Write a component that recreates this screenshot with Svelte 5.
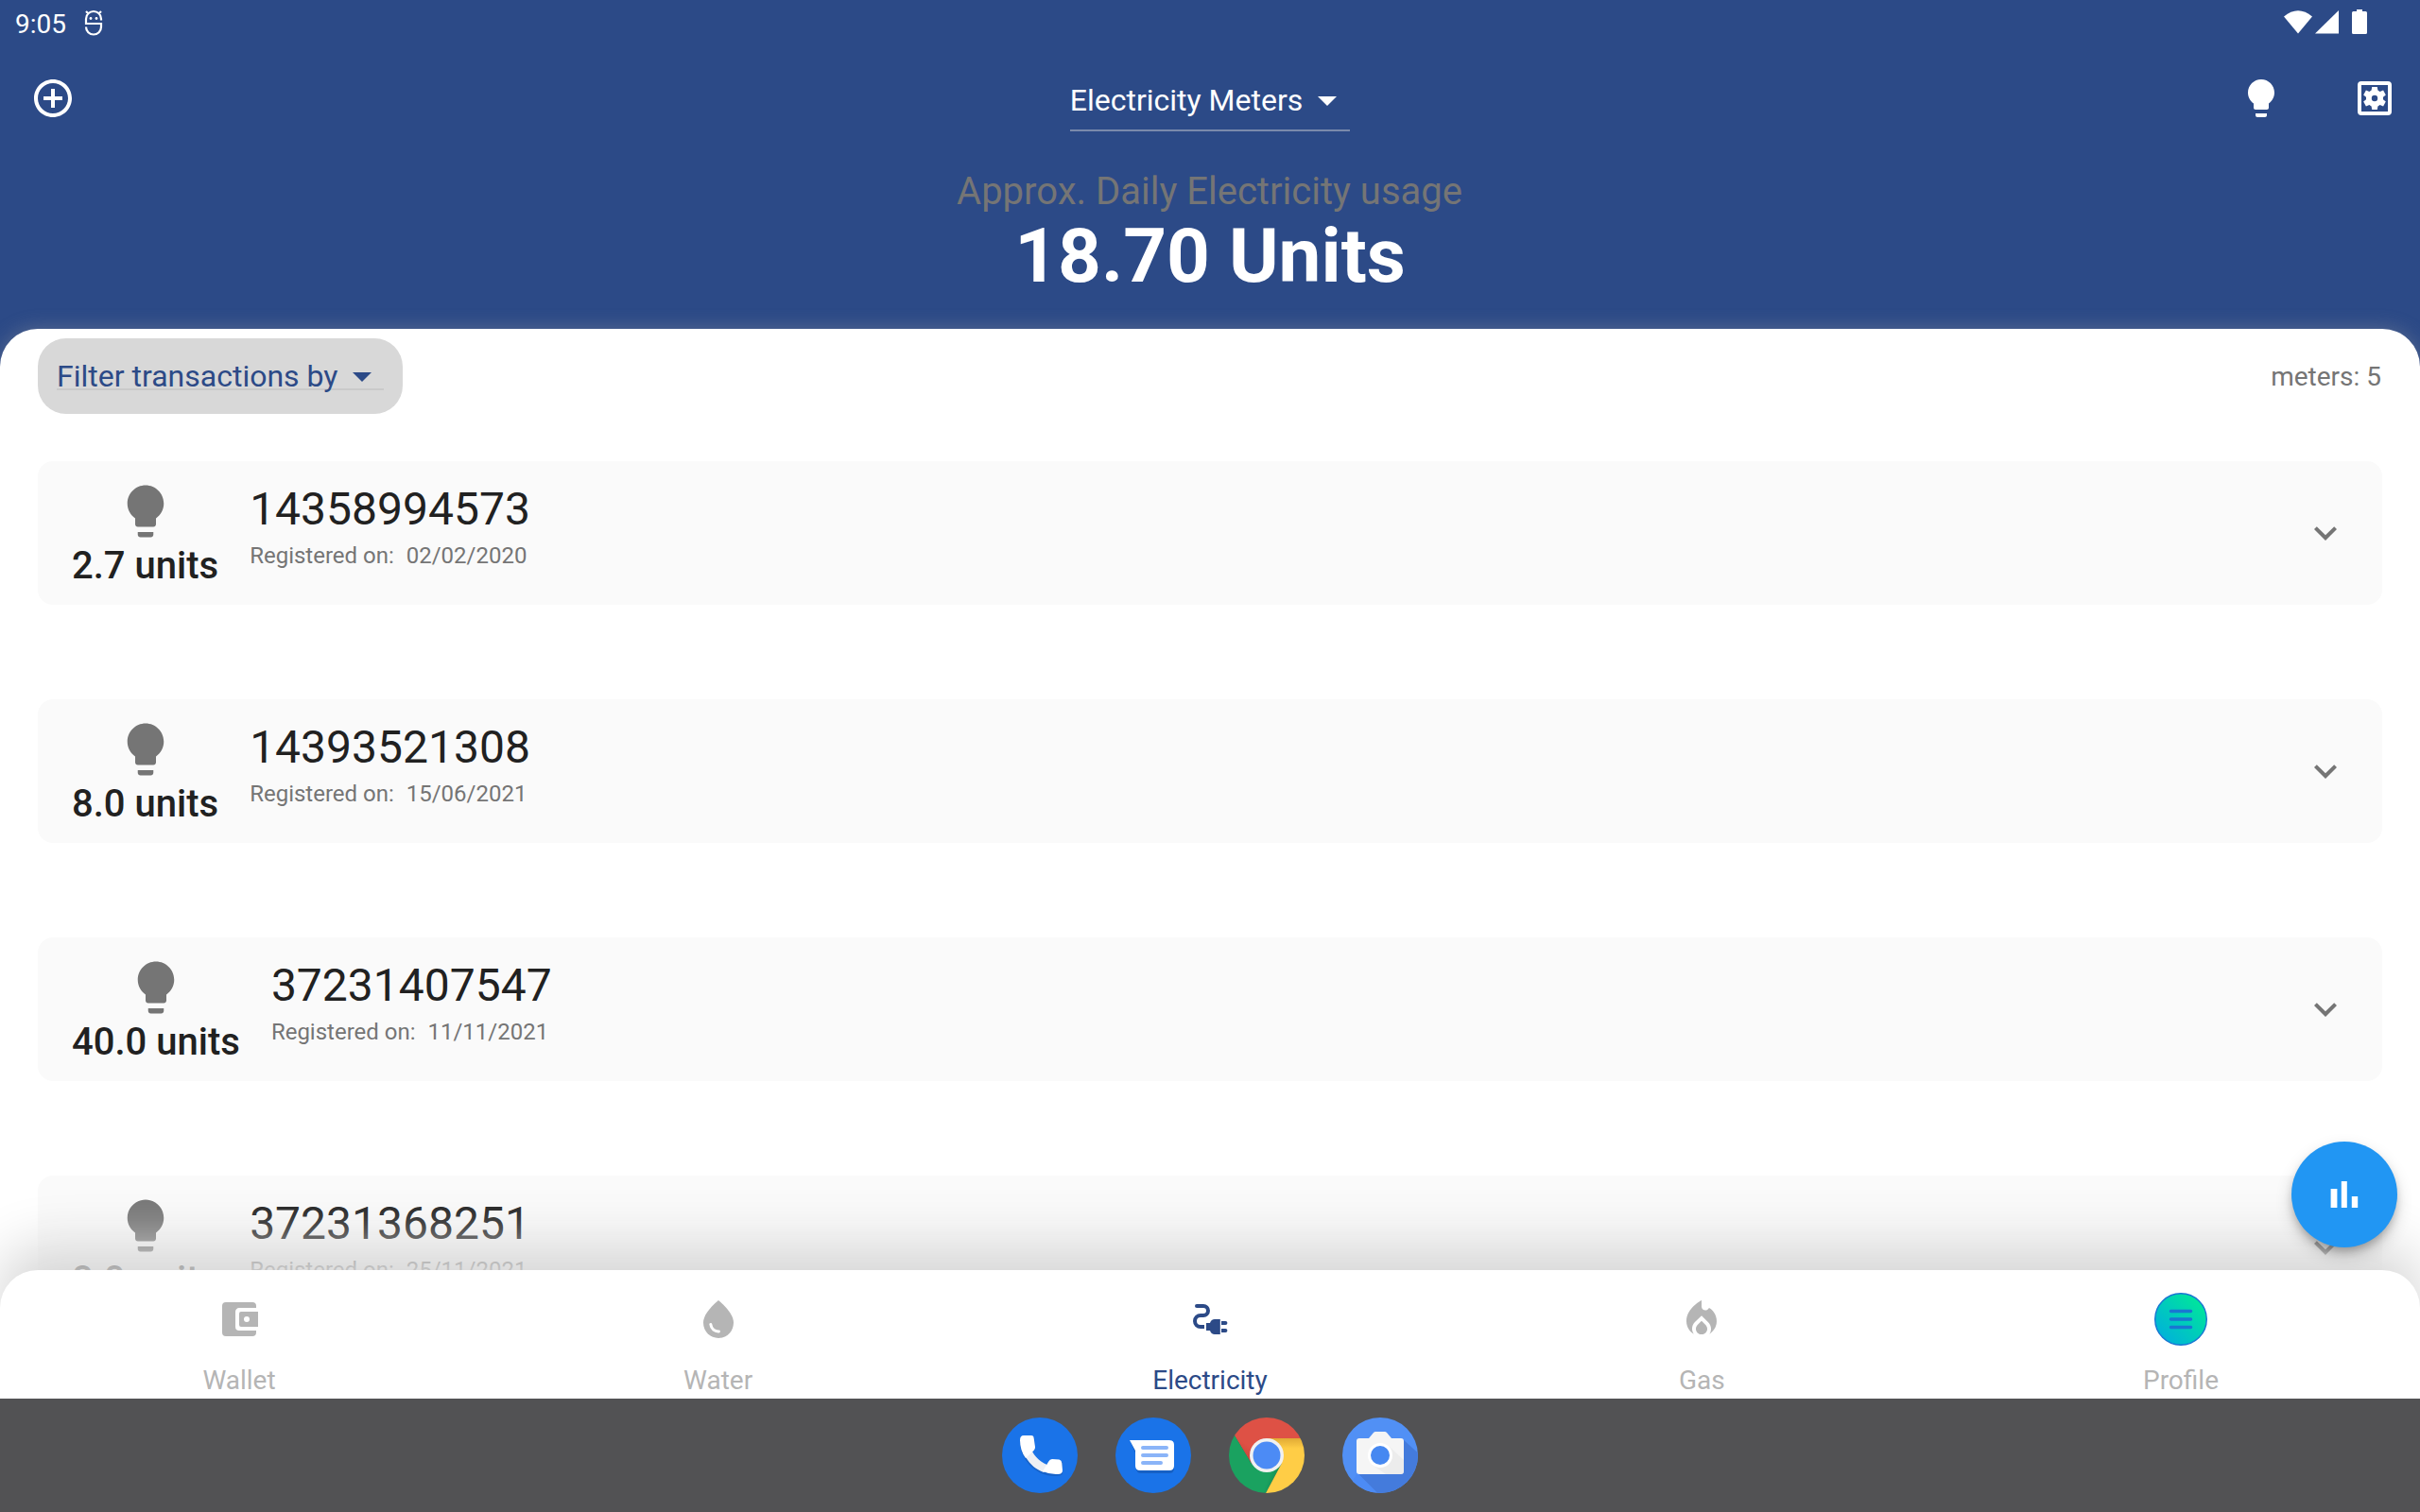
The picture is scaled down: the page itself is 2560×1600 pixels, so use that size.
<script>
  const bulb = 'M9 21c0 .55.45 1 1 1h4c.55 0 1-.45 1-1v-1H9v1zm3-19C8.14 2 5 5.14 5 9c0 2.38 1.19 4.47 3 5.74V17c0 .55.45 1 1 1h6c.55 0 1-.45 1-1v-2.26c1.81-1.27 3-3.36 3-5.74 0-3.86-3.14-7-7-7z';
  const meters = [
    { units: '2.7 units', number: '14358994573', date: '02/02/2020' },
    { units: '8.0 units', number: '14393521308', date: '15/06/2021' },
    { units: '40.0 units', number: '37231407547', date: '11/11/2021' },
    { units: '8.0 units', number: '37231368251', date: '25/11/2021' }
  ];
</script>

<div class="screen">
  <header>
    <div class="status">
      <span class="clock">9:05</span>
      <svg class="debug" viewBox="0 0 20 28" width="20" height="28" fill="none" stroke="#fff" stroke-width="2.200">
        <path d="M18 11.500V10a8 8 0 0 0-16 0v5h16v3.500a8 8 0 0 1-16 0M4.500 4.500 2 2M15.500 4.500 18 2" />
        <circle cx="7" cy="9.500" r="1.400" fill="#fff" stroke="none" /><circle cx="13" cy="9.500" r="1.400" fill="#fff" stroke="none" />
      </svg>
      <svg class="signals" viewBox="0 0 90 28" width="90" height="28" fill="#fff">
        <path d="M0 7.500Q15-5 30 7.500L15 25.500z" />
        <path d="M33 25.500 58 1v24.500z" />
        <path d="M77 0h6v2h3.500q1.500 0 1.500 1.500v21q0 1.500-1.500 1.500h-13q-1.500 0-1.500-1.500v-21Q72 2 73.500 2H77z" />
      </svg>
    </div>
    <div class="toolbar">
      <svg class="ic" viewBox="0 0 24 24"><path d="M13 7h-2v4H7v2h4v4h2v-4h4v-2h-4V7zm-1-5C6.480 2 2 6.480 2 12s4.480 10 10 10 10-4.480 10-10S17.520 2 12 2zm0 18c-4.410 0-8-3.590-8-8s3.590-8 8-8 8 3.590 8 8-3.590 8-8 8z" /></svg>
      <div class="picker"><span>Electricity Meters</span><svg class="ic" viewBox="0 0 24 24"><path d="M7 10l5 5 5-5z" /></svg></div>
      <div class="actions">
        <svg class="ic" viewBox="0 0 24 24"><path d={bulb} /></svg>
        <svg class="ic" viewBox="0 0 24 24"><path fill-rule="evenodd" d="M5 3h14a2 2 0 0 1 2 2v14a2 2 0 0 1-2 2H5a2 2 0 0 1-2-2V5a2 2 0 0 1 2-2zm0 2v14h14V5z" /><path fill-rule="evenodd" d="M10.600 6h2.800l.3 1.800 1.100.65 1.750-.65 1.350 2.400-1.400 1.150v1.300l1.400 1.150-1.350 2.400-1.750-.65-1.100.65-.3 1.800h-2.800l-.3-1.800-1.100-.65-1.750.65-1.350-2.400 1.400-1.150v-1.300l-1.400-1.150 1.350-2.400 1.750.65 1.100-.65zM12 10.400a1.600 1.600 0 1 0 0 3.200 1.600 1.600 0 0 0 0-3.200z" /></svg>
      </div>
    </div>
    <div class="caption">Approx. Daily Electricity usage</div>
    <div class="total">18.70 Units</div>
  </header>

  <main>
    <div class="filters">
      <div class="pill"><div class="pill-in"><span>Filter transactions by</span><svg class="ic" viewBox="0 0 24 24"><path d="M7 10l5 5 5-5z" /></svg></div></div>
      <span class="count">meters: 5</span>
    </div>
    <div class="list">
      {#each meters as m}
        <article>
          <div class="usage">
            <svg viewBox="0 0 24 24" width="66" height="66"><path d={bulb} /></svg>
            <span>{m.units}</span>
          </div>
          <div class="info">
            <div class="number">{m.number}</div>
            <div class="date">Registered on:&nbsp; <span>{m.date}</span></div>
          </div>
          <svg class="ic chev" viewBox="0 0 24 24"><path d="M16.590 8.590 12 13.170 7.410 8.590 6 10l6 6 6-6z" /></svg>
        </article>
      {/each}
    </div>
  </main>

  <nav>
    <div class="tab">
      <svg class="ic" viewBox="0 0 24 24"><path fill-rule="evenodd" d="M10 16V8c0-1.100.9-2 2-2h9V5a2 2 0 0 0-2-2H5a2 2 0 0 0-2 2v14a2 2 0 0 0 2 2h14a2 2 0 0 0 2-2v-1h-9a2 2 0 0 1-2-2zM13 8q-1 0-1 1v6q0 1 1 1h9V8zm3 2.500a1.500 1.500 0 1 1 0 3 1.500 1.500 0 0 1 0-3z" /></svg>
      <span>Wallet</span>
    </div>
    <div class="tab">
      <svg class="ic" viewBox="0 0 24 24"><path d="M12 2c-5.330 4.550-8 8.480-8 11.800 0 4.980 3.800 8.200 8 8.200s8-3.220 8-8.200c0-3.320-2.670-7.250-8-11.800z" /><path d="M7.900 14.700c.3 2.500 2.200 3.900 4.300 3.750" fill="none" stroke="#fff" stroke-width="1.500" stroke-linecap="round" /></svg>
      <span>Water</span>
    </div>
    <div class="tab active">
      <svg class="ic" viewBox="0 0 24 24"><path d="M5 5h3.500a2.500 2.500 0 0 1 0 5H7a3 3 0 0 0 0 6h2" fill="none" stroke="currentColor" stroke-width="2" /><circle cx="5" cy="5" r="1" /><path d="M10 14h2c.4-1.300 1.300-2 2.500-2h2.900v8h-2.900c-1.200 0-2.100-.7-2.500-2h-2z" /><path d="M18 13h2.200a1 1 0 0 1 0 2H18zM18 17h2.200a1 1 0 0 1 0 2H18z" /></svg>
      <span>Electricity</span>
    </div>
    <div class="tab">
      <svg class="ic" viewBox="0 0 24 24"><path d="M12 12.900 9.870 15c-.56.550-.87 1.290-.87 2.070C9 18.680 10.350 20 12 20s3-1.320 3-2.930c0-.78-.31-1.520-.87-2.070L12 12.900z" /><path d="m16 6-.44.550C14.380 8.020 12 7.190 12 5.300V2S4 6 4 13c0 2.920 1.560 5.470 3.890 6.860-.56-.79-.89-1.760-.89-2.800 0-1.320.52-2.560 1.470-3.500L12 10.100l3.530 3.470c.95.930 1.470 2.170 1.470 3.500 0 1.020-.31 1.960-.85 2.750 1.890-1.150 3.290-3.060 3.710-5.300.66-3.550-1.070-6.900-3.860-8.520z" /></svg>
      <span>Gas</span>
    </div>
    <div class="tab profile">
      <svg viewBox="0 0 56 56" width="56" height="56">
        <defs><linearGradient id="pg" x1=".1" y1=".9" x2=".9" y2=".1"><stop offset="0" stop-color="#00b0dc" /><stop offset="1" stop-color="#00e898" /></linearGradient></defs>
        <circle cx="28" cy="28" r="27.300" fill="url(#pg)" stroke="#1976d2" stroke-width="1.400" />
        <path d="M17.500 19.500h21M17.500 28h21M17.500 36.500h21" stroke="#1976d2" stroke-width="3.500" stroke-linecap="round" />
      </svg>
      <span>Profile</span>
    </div>
  </nav>

  <footer>
    <svg viewBox="0 0 80 80" width="80" height="80">
      <circle cx="40" cy="40" r="40" fill="#1a73e8" />
      <path d="M19 26c0 18 16 36 37 36 5 0 8-1 8-3V47H50l-6 8C37 51 31 46 26 40l9-6-1-13H22q-3 0-3 5z" fill="#1558b5" opacity=".6" />
      <path d="M25 42c5 8 11 13 19 16l8-6C41 48 34 41 31 34z" fill="#eef0f4" />
      <path d="M23 19h8q2.500 0 2.700 3l1.300 9q.2 2-1 3.500L25 43q-6-8-6-19 0-5 4-5z" fill="#fff" />
      <path d="M43 57l6-10q1.500-3 4-3l7.500.5q2.500.5 2.800 3.500l.7 8q0 4-5 4-8 .5-16-3z" fill="#fff" />
    </svg>
    <svg viewBox="0 0 80 80" width="80" height="80">
      <circle cx="40" cy="40" r="40" fill="#1a73e8" />
      <path d="M16 26l6 14v14q0 5 5 5h30q5 0 5-5V32z" fill="#1558b5" opacity=".7" />
      <path d="M15 24h42q5 0 5 5v22q0 5-5 5H26q-5 0-5-5V35z" fill="#fff" />
      <path d="M29 32h25M29 40h25M29 48h19" stroke="#8ab4f8" stroke-width="4" stroke-linecap="round" />
    </svg>
    <svg viewBox="0 0 80 80" width="80" height="80">
      <defs>
        <clipPath id="cc"><circle cx="40" cy="40" r="40" /></clipPath>
        <linearGradient id="cy" x1="0" y1="0" x2="0" y2="1"><stop offset="0" stop-color="#e0aa35" /><stop offset=".18" stop-color="#ffcd46" /></linearGradient>
        <linearGradient id="cr" x1="0" y1=".8" x2=".5" y2=".4"><stop offset="0" stop-color="#c33f33" /><stop offset=".5" stop-color="#de5145" /></linearGradient>
        <linearGradient id="cg" x1=".3" y1=".6" x2="1" y2=".9"><stop offset=".6" stop-color="#1aa260" /><stop offset="1" stop-color="#0f7a45" /></linearGradient>
      </defs>
      <g clip-path="url(#cc)">
        <path d="M0 0h80v22H40L24 49 6 19z" fill="url(#cr)" />
        <path d="M6 19L24 49 40 58 55.600 49 38 82H0V19z" fill="url(#cg)" />
        <path d="M40 22h42v60H38L55.600 49z" fill="url(#cy)" />
      </g>
      <circle cx="40" cy="40" r="18" fill="#f1f1f1" /><circle cx="40" cy="40" r="14.500" fill="#4c8bf5" />
    </svg>
    <svg viewBox="0 0 80 80" width="80" height="80">
      <defs><clipPath id="kc"><circle cx="40" cy="40" r="40" /></clipPath></defs>
      <circle cx="40" cy="40" r="40" fill="#5190f5" />
      <g clip-path="url(#kc)">
        <path d="M64 23l20 18v42H40L16 59z" fill="#447bdc" />
        <path d="M16 59l24 24H0z" fill="#4c8bf5" />
        <path d="M18 22h10l5-6q1-1 2-1h10q1 0 2 1l5 6h10q3 0 3 3v32q0 3-3 3H18q-3 0-3-3V25q0-3 3-3z" fill="#f5f5f5" />
        <path d="M50 31l15 14v12q0 3-3 3H46L31 50z" fill="#ddd" opacity=".35" />
      </g>
      <circle cx="40" cy="40" r="13" fill="#fff" /><circle cx="40" cy="40" r="10" fill="#4688f1" />
    </svg>
  </footer>

  <div class="fab"><svg viewBox="0 0 24 24" width="48" height="48" fill="#fff"><path d="M4.800 9H8.200V19H4.800zM10.400 5h3v14h-3zM15.900 13h3.200v6h-3.200z" /></svg></div>
</div>

<style>
  :global(body) { margin: 0; overflow: hidden; }
  .screen { position: relative; width: 2560px; height: 1600px; overflow: hidden; display: flex; flex-direction: column; background: #2c4a87; font-family: Roboto, sans-serif; }
  svg { display: block; flex: none; }
  .ic { width: 48px; height: 48px; fill: currentColor; }
  header { height: 348px; flex: none; color: #fff; display: flex; flex-direction: column; }
  .status { height: 50px; display: flex; align-items: center; padding: 0 54px 0 16px; }
  .clock { font-size: 28px; line-height: 50px; padding-top: 2px; }
  .debug { margin-left: 19px; margin-top: -2px; }
  .signals { margin-left: auto; margin-top: -2px; }
  .toolbar { height: 112px; flex: none; display: grid; grid-template-columns: 1fr auto 1fr; padding: 0 24px; margin-bottom: 8px; }
  .toolbar > .ic { margin: 30px 0 0 8px; }
  .picker { display: flex; align-items: center; height: 68px; box-sizing: border-box; margin-top: 21px; border-bottom: 2px solid #7a8aab; font-size: 32px; padding-top: 4px; }
  .picker, .pill-in { white-space: nowrap; }
  .picker .ic, .pill-in .ic { margin-left: 2px; }
  .actions { display: flex; justify-content: flex-end; gap: 72px; padding-top: 30px; }
  .caption { font-size: 40px; line-height: 46px; margin-top: 10px; text-align: center; color: #757575; padding-right: 1px; }
  .total { font-size: 80px; line-height: 91px; font-weight: 700; text-align: center; }
  main { flex: none; height: 1036px; background: #fff; border-radius: 40px 40px 0 0; box-shadow: 0 0 20px rgba(158, 158, 158, .4); }
  .filters { display: flex; justify-content: space-between; padding: 10px 40px 0; }
  .pill { box-sizing: border-box; width: 386px; height: 80px; padding: 15px 20px; border-radius: 30px; background: #d8d8d8; color: #2c4a87; }
  .pill-in { display: flex; align-items: center; height: 27px; padding-top: 11px; border-bottom: 2px solid #cacaca; font-size: 32px; }
  .count { font-size: 28px; line-height: 80px; padding: 1px 1px 0 0; margin-bottom: -1px; color: #757575; }
  .list { padding: 50px 40px 0; display: flex; flex-direction: column; gap: 100px; height: 856px; }
  article { flex: none; box-sizing: border-box; height: 152px; padding: 20px 36px; display: flex; background: #fafafa; border-radius: 16px; color: #212121; }
  .usage { display: flex; flex-direction: column; align-items: center; font-size: 40px; line-height: 49px; font-weight: 500; }
  .usage svg { fill: #757575; }
  .info { margin-left: 33px; }
  .number { font-size: 48px; line-height: 56px; margin-top: 3px; }
  .date { font-size: 24px; line-height: 28px; margin-top: 7px; color: #757575; }
  .date span { margin-left: 1px; }
  .chev { margin: 32px 0 0 auto; color: #757575; }
  nav { position: relative; flex: none; box-sizing: border-box; height: 136px; margin-top: -40px; display: flex; justify-content: space-between; padding: 24px 206px 0; background: #fff; border-radius: 40px 40px 0 0; box-shadow: 0 -25px 59px #d6d6d6; color: #b5b5b5; }
  .tab { display: flex; flex-direction: column; align-items: center; min-width: 94px; font-size: 28px; line-height: 32px; }
  .tab svg { margin: 4px 0 20px; }
  .tab.profile svg { margin: 0 0 16px; }
  .tab span { margin-top: 5px; }
  .active { color: #2c4a87; }
  footer { position: relative; flex: none; height: 120px; display: flex; justify-content: center; gap: 40px; padding-top: 20px; box-sizing: border-box; background: #525254; }
  .fab { position: absolute; left: 2424px; top: 1208px; width: 112px; height: 112px; border-radius: 50%; display: flex; align-items: center; justify-content: center; background: #2196f3; box-shadow: 0 6px 10px -2px rgba(0, 0, 0, .25), 0 8px 18px rgba(0, 0, 0, .16); }
</style>
